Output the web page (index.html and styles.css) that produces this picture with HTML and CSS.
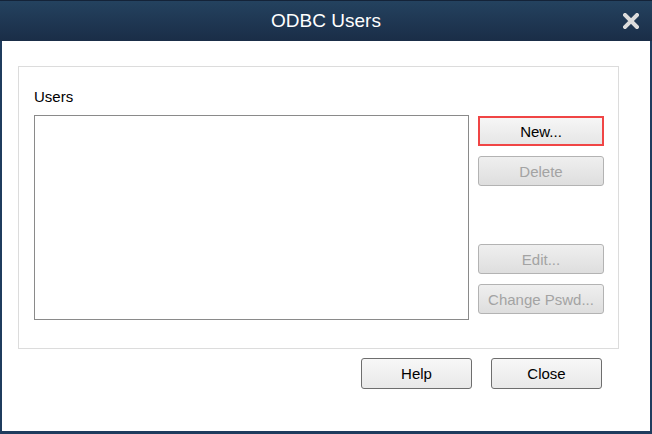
FILE: index.html
```html
<!DOCTYPE html>
<html lang="en">
<head>
    <meta charset="UTF-8">
    <title>ODBC Users</title>
    <link rel="stylesheet" href="styles.css">
</head>
<body>
    <div class="window">
        <header class="title-bar">
            <h1>ODBC Users</h1>
            <button class="close-x" title="Close">
                <svg width="16" height="16" viewBox="0 0 16 16">
                    <path d="M2 2 L14 14 M14 2 L2 14" stroke="#dcdcdc" stroke-width="4" stroke-linecap="square"/>
                </svg>
            </button>
        </header>
        <div class="content">
            <div class="group">
                <label class="group-label">Users</label>
                <div class="group-row">
                    <div class="list-box"></div>
                    <div class="side-buttons">
                        <button class="btn focused">New...</button>
                        <button class="btn" disabled>Delete</button>
                        <div class="spacer"></div>
                        <button class="btn" disabled>Edit...</button>
                        <button class="btn" disabled>Change Pswd...</button>
                    </div>
                </div>
            </div>
            <div class="footer-buttons">
                <button class="btn dialog">Help</button>
                <button class="btn dialog">Close</button>
            </div>
        </div>
    </div>
</body>
</html>
```

FILE: styles.css
```css
body {
    margin: 0;
    font-family: 'Liberation Sans', Arial, sans-serif;
    background: #1f3c5e;
}

.window {
    width: 652px;
    height: 434px;
    box-sizing: border-box;
    padding: 0 2px 3px 2px;
    background: #1f3c5e;
    display: flex;
    flex-direction: column;
}

.title-bar {
    height: 41px;
    margin: 0 -2px;
    background: linear-gradient(to bottom, #24425f, #1a2d47);
    border-top: 1px solid #142338;
    box-sizing: border-box;
    position: relative;
    display: flex;
    align-items: center;
    justify-content: center;
}

.title-bar h1 {
    margin: 0;
    font-size: 19px;
    font-weight: normal;
    color: #ffffff;
}

.close-x {
    position: absolute;
    right: 13px;
    top: 12px;
    background: none;
    border: none;
    padding: 0;
    width: 16px;
    height: 16px;
}

.content {
    flex: 1;
    background: #ffffff;
    padding: 25px 0 0 16px;
}

.group {
    width: 601px;
    height: 283px;
    box-sizing: border-box;
    border: 1px solid #dcdcdc;
    padding: 21px 0 0 15px;
}

.group-label {
    display: block;
    font-size: 15px;
    line-height: 17px;
    color: #000;
    margin-bottom: 10px;
}

.group-row {
    display: flex;
    gap: 9px;
}

.list-box {
    width: 435px;
    height: 205px;
    box-sizing: border-box;
    border: 1px solid #8a8a8a;
    background: #fff;
}

.side-buttons {
    display: flex;
    flex-direction: column;
    gap: 10px;
    padding-top: 1px;
}

.side-buttons .spacer {
    height: 38px;
}

.btn {
    width: 126px;
    height: 30px;
    box-sizing: border-box;
    font-family: 'Liberation Sans', Arial, sans-serif;
    font-size: 15px;
    color: #000;
    background: linear-gradient(to bottom, #f6f6f6, #e6e6e6);
    border: 1px solid #adadad;
    border-radius: 3px;
    padding: 0;
}

.btn:disabled {
    color: #a3a3a3;
    background: linear-gradient(to bottom, #efefef, #dedede);
    border-color: #b3b3b3;
}

.btn.focused {
    border: 2px solid #f04545;
    border-radius: 0;
}

.footer-buttons {
    display: flex;
    gap: 19px;
    margin-top: 9px;
    padding-left: 343px;
}

.btn.dialog {
    width: 111px;
    height: 31px;
    border-color: #6e6e6e;
    background: linear-gradient(to bottom, #f7f7f7, #e9e9e9);
}
```
